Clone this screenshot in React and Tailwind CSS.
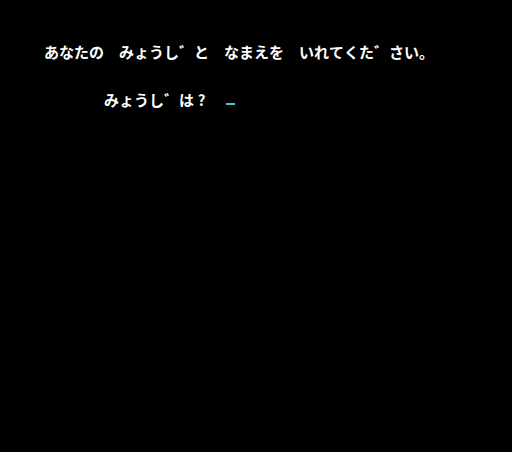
import React from "react";

const line1 = ["あ","な","た","の","　","み","ょ","う","し","゛","と","　","な","ま","え","を","　","い","れ","て","く","た","゛","さ","い","。"];
const line2 = ["み","ょ","う","し","゛","は","?","　"];

function Row({ chars }) {
  return (
    <div className="flex h-[15px]">
      {chars.map((c, i) => (
        <span
          key={i}
          className="inline-flex w-[15px] h-[15px] items-center justify-center text-[15px] leading-[15px] font-bold text-white"
        >
          {c}
        </span>
      ))}
    </div>
  );
}

export default function App() {
  return (
    <div
      className="w-[512px] h-[452px] bg-black pt-[44px] pl-[44px] overflow-hidden"
      style={{ fontFamily: '"Noto Sans CJK JP", "Noto Sans", sans-serif' }}
    >
      <Row chars={line1} />
      <div className="flex mt-[33px] ml-[60px]">
        <Row chars={line2} />
        <div className="w-[15px] h-[15px] flex flex-col">
          <div className="mt-[11px] ml-[2px] w-[9px] h-[2px] bg-[#4fc8dc]" />
        </div>
      </div>
    </div>
  );
}
